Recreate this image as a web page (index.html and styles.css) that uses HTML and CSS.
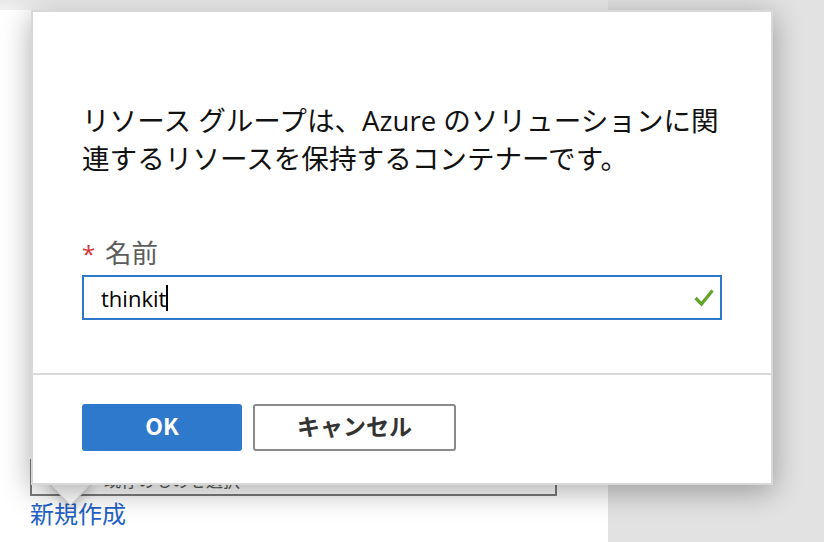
FILE: index.html
```html
<!DOCTYPE html>
<html lang="ja">
<head>
<meta charset="utf-8">
<link rel="stylesheet" href="styles.css">
</head>
<body>
<div class="screen">
  <div class="panel">
    <div class="topstrip"></div>
    <div class="panel-body">
      <div class="select-box"><span class="select-text">既存のものを選択</span></div>
      <a class="new-link">新規作成</a>
    </div>
  </div>
  <div class="side"></div>

  <div class="dialog">
    <div class="dialog-body">
      <p class="desc">リソース グループは、Azure のソリューションに関<br>連するリソースを保持するコンテナーです。</p>
      <div class="label"><span class="req">*</span><span class="label-text">名前</span></div>
      <div class="input">
        <span class="input-text">thinkit</span><span class="caret"></span>
        <svg class="check" width="20" height="19" viewBox="0 0 20 19"><path d="M1.5 10 L7.5 16 L18.5 2.5" fill="none" stroke="#62a429" stroke-width="3.2"/></svg>
      </div>
    </div>
    <div class="divider"></div>
    <div class="dialog-footer">
      <button class="btn btn-primary">OK</button>
      <button class="btn btn-secondary">キャンセル</button>
    </div>
  </div>
  <div class="arrow"></div>
</div>
</body>
</html>
```
FILE: styles.css
```css
html, body {
  margin: 0;
  padding: 0;
}
body {
  width: 824px;
  height: 542px;
  overflow: hidden;
  font-family: "Open Sans", "Noto Sans CJK JP", sans-serif;
}
.screen {
  position: relative;
  display: flex;
  width: 824px;
  height: 542px;
}
.panel {
  width: 608px;
  background: #ffffff;
  display: flex;
  flex-direction: column;
}
.topstrip {
  height: 10px;
  background: linear-gradient(#e9e9e9, #f1f1f1);
}
.panel-body {
  padding: 449px 0 0 30px;
  display: flex;
  flex-direction: column;
}
.select-box {
  box-sizing: border-box;
  width: 527px;
  height: 37px;
  border: 2px solid #7c7c7c;
  display: flex;
  align-items: center;
  padding-left: 72px;
}
.select-text {
  font-size: 17px;
  color: #555;
  margin-top: 4px;
  font-family: "Noto Sans CJK JP", sans-serif;
}
.new-link {
  font-size: 24px;
  line-height: 32px;
  color: #2261c4;
  margin-top: 1px;
  font-family: "Noto Sans CJK JP", sans-serif;
}
.side {
  flex: 1;
  background: #e2e2e2;
}
.dialog {
  position: absolute;
  left: 31px;
  top: 10px;
  width: 742px;
  box-sizing: border-box;
  background: #ffffff;
  border: 2px solid #d8d8d8;
  box-shadow: 0 6px 28px rgba(0, 0, 0, 0.33);
  z-index: 2;
}
.dialog-body {
  padding: 89px 49px 53px 49px;
}
.desc {
  margin: 0;
  font-size: 27.6px;
  line-height: 38px;
  color: #111;
  white-space: nowrap;
}
.label {
  margin-top: 58px;
  display: flex;
  align-items: center;
  height: 32px;
}
.req {
  color: #d13438;
  font-size: 24px;
  width: 23px;
  line-height: 32px;
  position: relative;
  top: 3px;
}
.label-text {
  font-size: 26.5px;
  color: #5c5c5c;
  font-family: "Noto Sans CJK JP", sans-serif;
}
.input {
  margin-top: 8px;
  height: 45px;
  border: 2px solid #2e78c9;
  box-sizing: border-box;
  display: flex;
  align-items: center;
  padding-left: 17px;
  position: relative;
}
.input-text {
  font-size: 22px;
  color: #000;
}
.caret {
  display: inline-block;
  width: 2px;
  height: 26px;
  background: #000;
}
.check {
  position: absolute;
  right: 6px;
  top: 11px;
}
.divider {
  height: 2px;
  background: #d9d9d9;
}
.dialog-footer {
  display: flex;
  gap: 11px;
  padding: 29px 49px 32px 49px;
}
.btn {
  height: 47px;
  border-radius: 3px;
  font-family: "Noto Sans CJK JP", sans-serif;
  font-weight: bold;
  font-size: 23px;
  box-sizing: border-box;
  cursor: pointer;
  padding: 0 0 5px 0;
}
.btn-primary {
  width: 160px;
  background: #2f79cd;
  border: none;
  color: #fff;
}
.btn-secondary {
  width: 203px;
  background: #fff;
  border: 2px solid #8a8a8a;
  color: #333;
}
.arrow {
  position: absolute;
  left: 55px;
  top: 467px;
  width: 31px;
  height: 31px;
  background: #fff;
  transform: rotate(45deg);
  box-shadow: 1px 1px 0 #d8d8d8, 4px 4px 10px rgba(0,0,0,0.2);
  z-index: 1;
}
```
